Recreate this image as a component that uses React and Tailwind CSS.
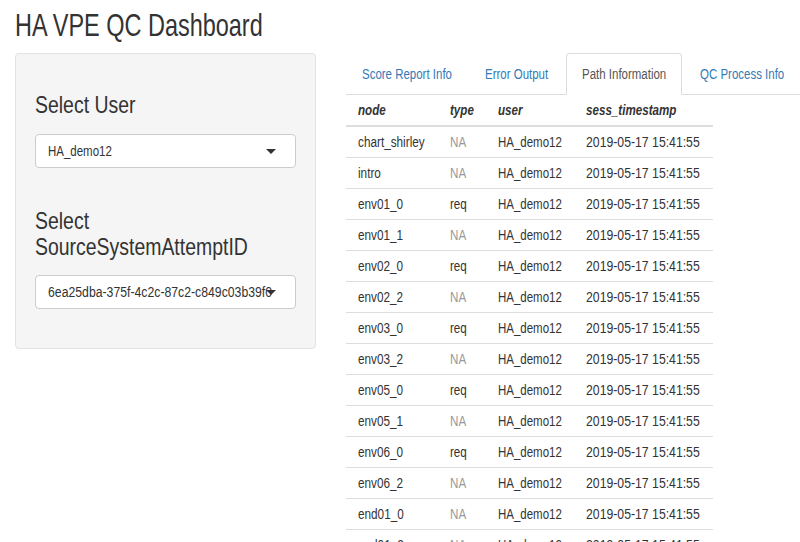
import React from "react";

const rows = [
  ["chart_shirley", "NA"],
  ["intro", "NA"],
  ["env01_0", "req"],
  ["env01_1", "NA"],
  ["env02_0", "req"],
  ["env02_2", "NA"],
  ["env03_0", "req"],
  ["env03_2", "NA"],
  ["env05_0", "req"],
  ["env05_1", "NA"],
  ["env06_0", "req"],
  ["env06_2", "NA"],
  ["end01_0", "NA"],
  ["end01_2", "NA"],
];

function N({ children, c = "scale-x-[0.83]" }) {
  return <span className={`inline-block origin-left whitespace-nowrap ${c}`}>{children}</span>;
}

function Caret() {
  return (
    <svg width="10" height="5" viewBox="0 0 10 5" className="absolute right-[19px] top-[14px]">
      <polygon points="0,0 10,0 5,5" fill="#333" />
    </svg>
  );
}

function SelectBox({ value, c }) {
  return (
    <div className="relative h-[34px] w-full rounded-[4px] border border-[#ccc] bg-white pl-[12px] overflow-hidden">
      <div className="leading-[32px] whitespace-nowrap text-[14px] text-[#333]">
        <N c={c}>{value}</N>
      </div>
      <Caret />
    </div>
  );
}

const tabs = [
  ["Score Report Info", "w-[121px]"],
  ["Error Output", "w-[95px]"],
  ["Path Information", "w-[116px]"],
  ["QC Process Info", "w-[120px]"],
];

export default function App() {
  return (
    <div
      className="w-[800px] h-[542px] overflow-hidden bg-white text-[#333]"
      style={{ fontFamily: '"Liberation Sans", Arial, sans-serif' }}
    >
      <div className="px-[15px] pt-[8px]">
        <h2 className="text-[32px] leading-[35px] text-[#333] m-0 font-normal">
          <N c="scale-x-[0.733]">HA VPE QC Dashboard</N>
        </h2>
      </div>
      <div className="flex mt-[10px]">
        <div className="pl-[15px] w-[331px] shrink-0 pr-[15px]">
          <div className="h-[296px] rounded-[4px] border border-[#e3e3e3] bg-[#f5f5f5] px-[19px] pt-[38px]">
            <div className="text-[24px] leading-[26px] mb-[16px]">
              <N c="scale-x-[0.81]">Select User</N>
            </div>
            <SelectBox value="HA_demo12" c="scale-x-[0.82]" />
            <div className="text-[24px] leading-[26px] mt-[40px] mb-[15px]">
              <N c="scale-x-[0.81]">Select</N>
              <br />
              <N c="scale-x-[0.81]">SourceSystemAttemptID</N>
            </div>
            <SelectBox value="6ea25dba-375f-4c2c-87c2-c849c03b39f0" c="scale-x-[0.875]" />
          </div>
        </div>
        <div className="flex-1 pl-[15px] min-w-0">
          <div className="flex border-b border-[#ddd] h-[42px] items-end">
            {tabs.map(([t, w], i) => (
              <div
                key={t}
                className={`${w} shrink-0 mr-[2px] -mb-px pl-[15px] py-[10px] text-[14px] leading-[20px] rounded-t-[4px] border whitespace-nowrap ${
                  i === 2
                    ? "border-[#ddd] border-b-white bg-white text-[#555]"
                    : "border-transparent text-[#337ab7]"
                }`}
              >
                <N c="scale-x-[0.82]">{t}</N>
              </div>
            ))}
          </div>
          <table className="table-fixed w-[367px] border-collapse text-[14px] leading-[20px]">
            <colgroup>
              <col className="w-[92px]" />
              <col className="w-[48px]" />
              <col className="w-[88px]" />
              <col className="w-[139px]" />
            </colgroup>
            <thead>
              <tr className="border-b-2 border-[#ddd]">
                {["node", "type", "user", "sess_timestamp"].map((h) => (
                  <th key={h} className="text-left font-bold italic px-[12px] py-[5px] whitespace-nowrap">
                    <N>{h}</N>
                  </th>
                ))}
              </tr>
            </thead>
            <tbody>
              {rows.map(([n, t], i) => (
                <tr key={n} className={i > 0 ? "border-t border-[#ddd]" : ""}>
                  <td className="px-[12px] py-[5px] whitespace-nowrap">
                    <N c="scale-x-[0.84]">{n}</N>
                  </td>
                  <td className={`px-[12px] py-[5px] whitespace-nowrap ${t === "NA" ? "text-[#999]" : ""}`}>
                    <N>{t}</N>
                  </td>
                  <td className="px-[12px] py-[5px] whitespace-nowrap">
                    <N c="scale-x-[0.82]">HA_demo12</N>
                  </td>
                  <td className="px-[12px] py-[5px] whitespace-nowrap">
                    <N c="scale-x-[0.875]">2019-05-17 15:41:55</N>
                  </td>
                </tr>
              ))}
            </tbody>
          </table>
        </div>
      </div>
    </div>
  );
}
